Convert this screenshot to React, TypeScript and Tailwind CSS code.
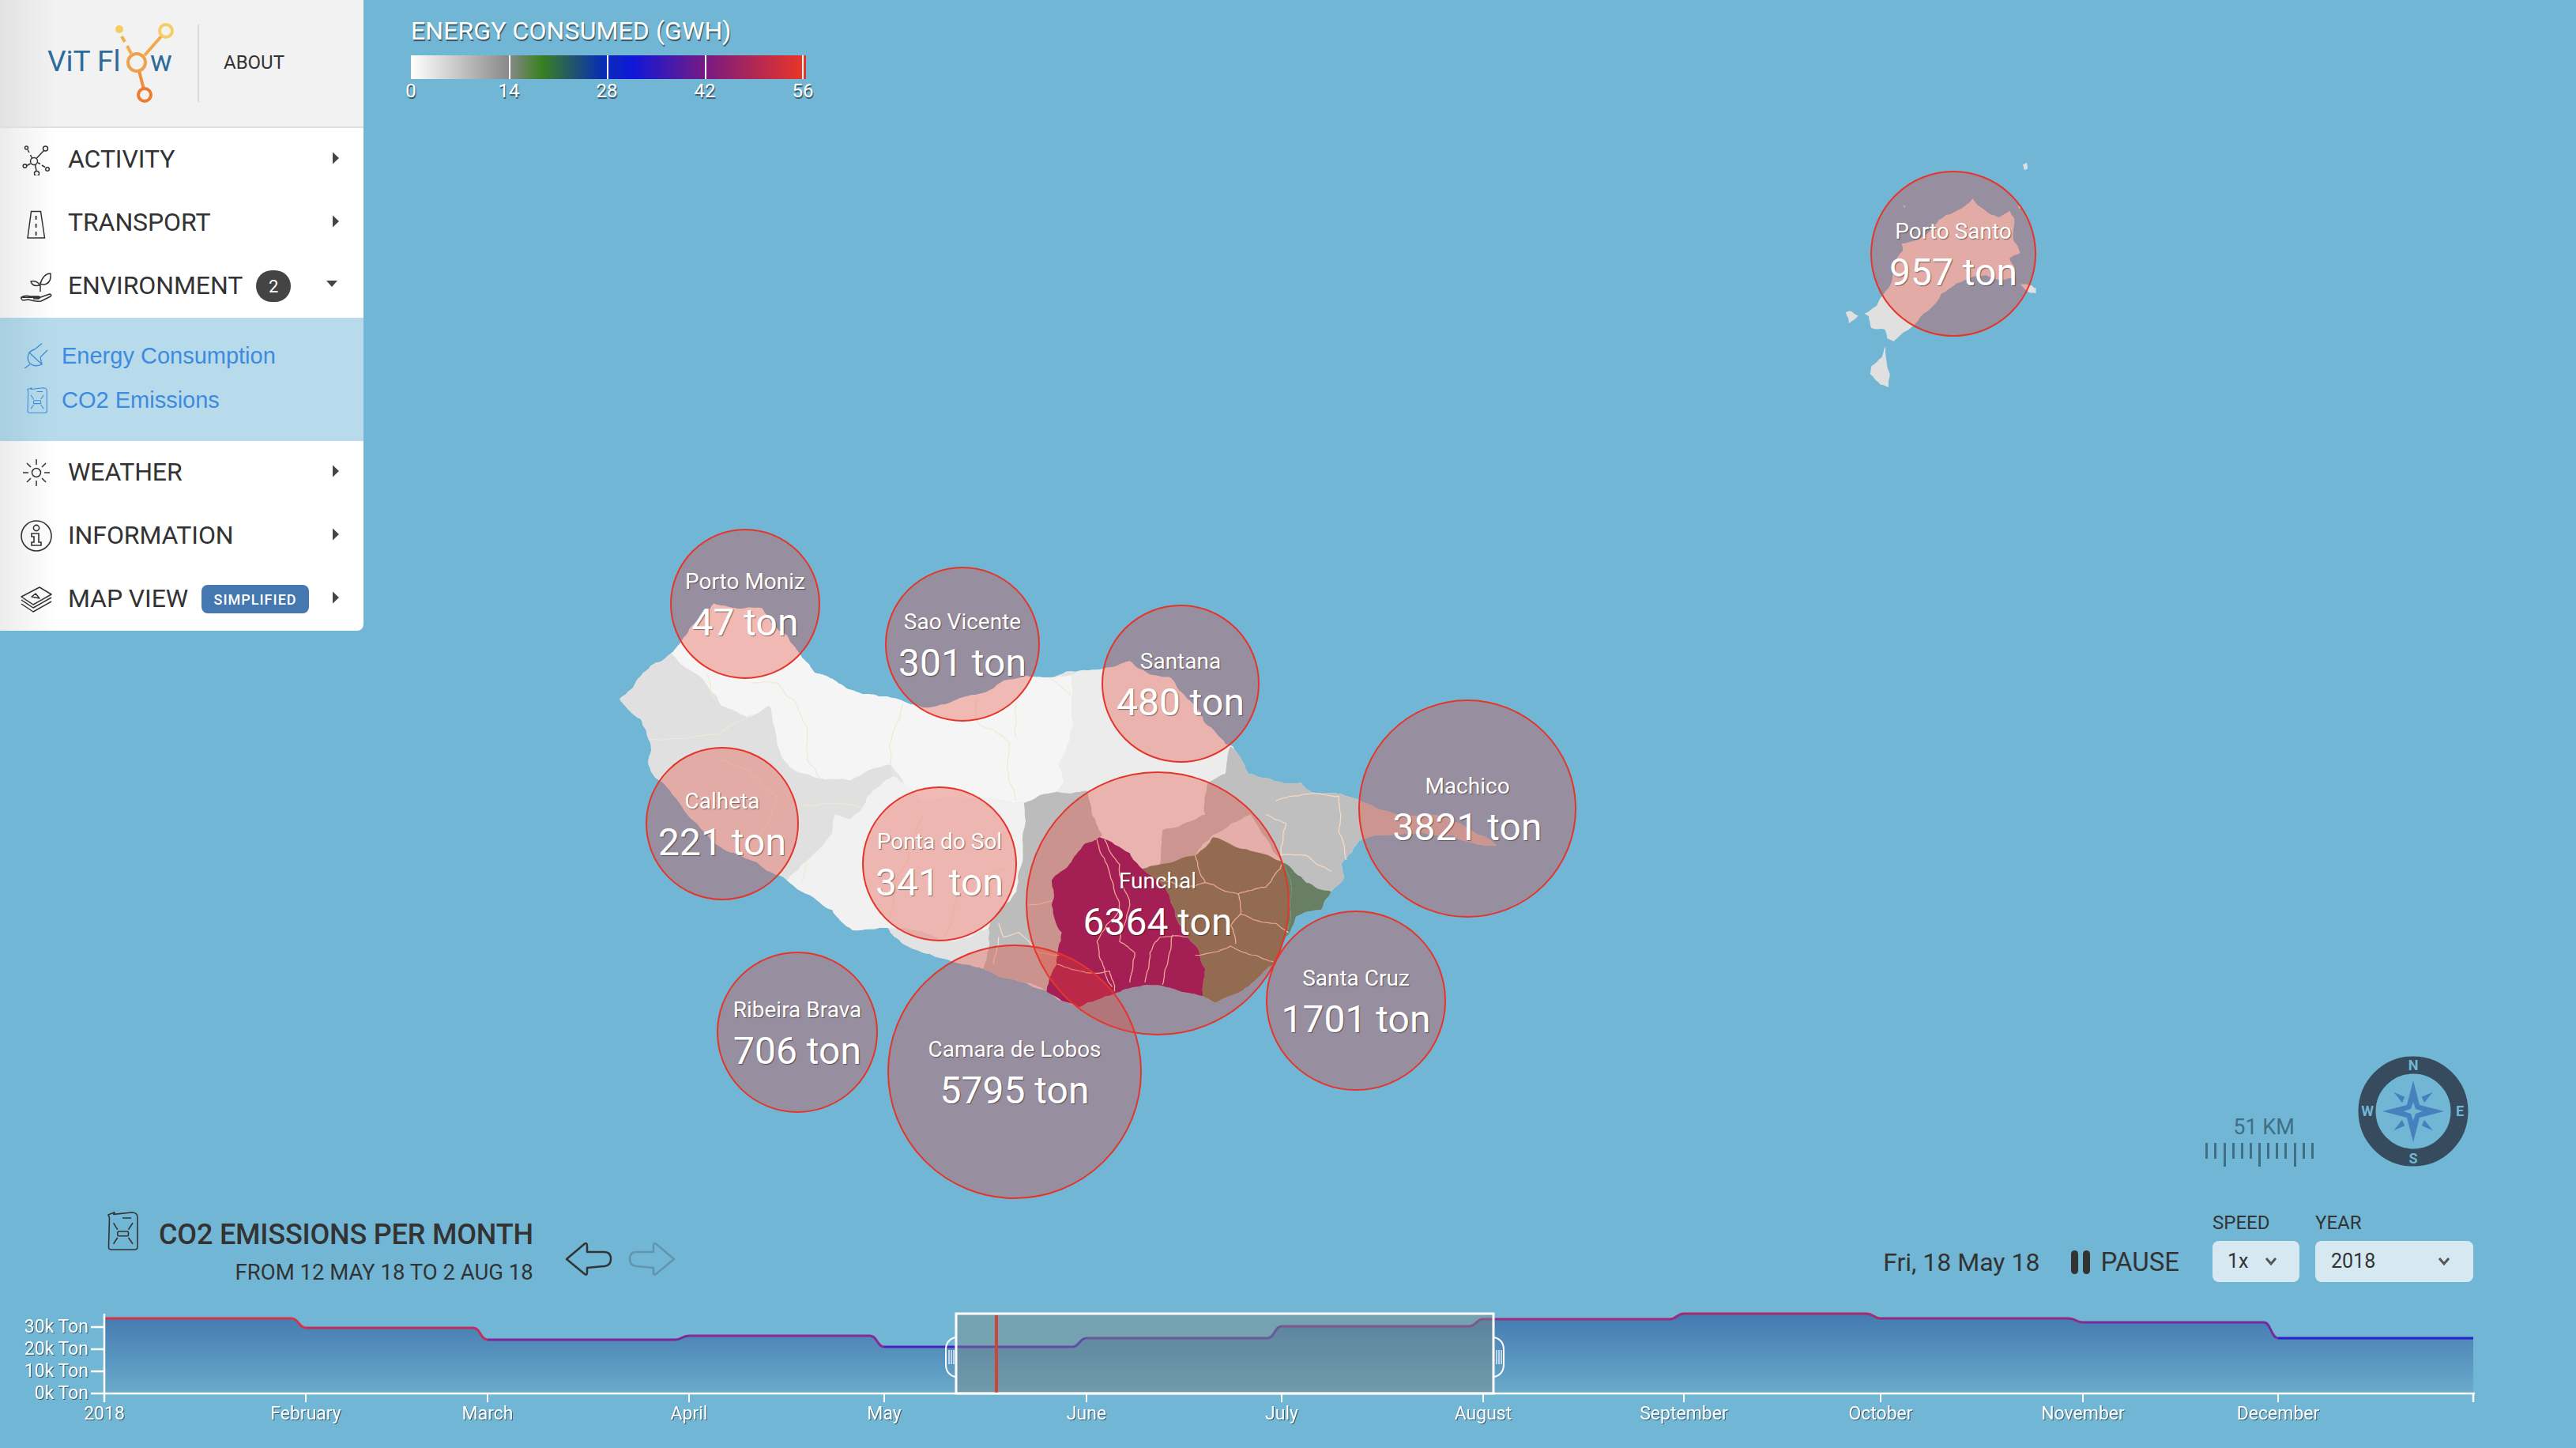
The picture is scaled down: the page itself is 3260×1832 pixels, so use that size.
import { ReactNode } from "react";

const FONT = "font-['Roboto',sans-serif]";

const bubbles = [
  { name: "Porto Moniz", value: "47 ton", cx: 943, cy: 764, r: 95 },
  { name: "Sao Vicente", value: "301 ton", cx: 1218, cy: 815, r: 98 },
  { name: "Santana", value: "480 ton", cx: 1494, cy: 865, r: 100 },
  { name: "Calheta", value: "221 ton", cx: 914, cy: 1042, r: 97 },
  { name: "Ponta do Sol", value: "341 ton", cx: 1189, cy: 1093, r: 98 },
  { name: "Funchal", value: "6364 ton", cx: 1465, cy: 1143, r: 167 },
  { name: "Ribeira Brava", value: "706 ton", cx: 1009, cy: 1306, r: 102 },
  { name: "Camara de Lobos", value: "5795 ton", cx: 1284, cy: 1356, r: 161 },
  { name: "Santa Cruz", value: "1701 ton", cx: 1716, cy: 1266, r: 114 },
  { name: "Machico", value: "3821 ton", cx: 1857, cy: 1023, r: 138 },
  { name: "Porto Santo", value: "957 ton", cx: 2472, cy: 321, r: 105 },
];

const outline =
  "38,425 60,405 80,375 100,352 140,325 165,290 190,255 225,215 265,225 320,225 345,265 370,285 400,335 425,368 465,385 495,405 520,415 555,420 610,435 650,445 700,430 760,412 800,385 840,375 890,378 960,362 1000,358 1050,342 1090,372 1130,378 1170,430 1200,480 1240,525 1255,530 1270,555 1285,590 1335,605 1360,612 1390,610 1410,630 1470,635 1505,648 1573,678 1678,685 1778,749 1690,725 1568,725 1510,735 1470,790 1475,820 1450,850 1430,890 1380,905 1360,950 1335,1010 1300,1045 1270,1070 1220,1095 1195,1080 1130,1062 1060,1060 1020,1075 950,1105 890,1070 840,1050 800,1040 760,1020 720,1010 690,1000 640,985 600,965 570,930 500,935 460,890 430,870 370,825 310,785 250,760 160,660 110,600 95,570 98,520 80,470 40,430";

const regions = [
  // west
  { fill: "#e0e0e0", points: "38,425 60,405 80,375 100,352 140,325 190,370 240,440 290,465 335,440 350,520 375,575 430,600 495,605 575,570 580,595 530,640 520,665 495,690 465,680 460,720 430,760 400,790 370,825 310,785 250,760 160,660 110,600 95,570 98,520 80,470 40,430" },
  // north west
  { fill: "#f5f5f5", points: "140,325 165,290 190,255 225,215 265,225 320,225 345,265 370,285 400,335 425,368 465,385 495,405 520,415 555,420 610,435 650,445 700,430 760,412 800,385 840,375 890,378 935,372 935,440 930,520 908,570 920,610 905,630 840,655 780,645 640,650 575,570 495,605 430,600 375,575 350,520 335,440 290,465 240,440 190,370" },
  // south middle
  { fill: "#f1f1f1", points: "370,825 400,790 430,760 460,720 465,680 495,690 520,665 530,640 580,595 640,650 780,645 840,655 838,760 825,850 770,930 700,960 570,930 500,935 460,890 430,870" },
  { fill: "#e2e2e2", points: "570,930 700,960 770,930 760,1020 720,1010 690,1000 640,985 600,965" },
  // north east
  { fill: "#ececec", points: "935,372 960,362 1000,358 1050,342 1090,372 1130,378 1170,430 1200,480 1240,525 1250,530 1240,590 1205,610 1200,680 1150,705 1115,715 1110,790 1075,800 1050,765 990,730 975,680 965,628 905,630 920,610 908,570 930,520 935,440" },
  // grey centre
  { fill: "#bcbcbc", points: "840,655 905,630 965,628 975,680 995,725 975,745 930,790 895,825 895,880 915,940 905,1010 885,1070 840,1050 800,1040 760,1020 770,930 825,850 838,760" },
  // grey east
  { fill: "#bfbfbf", points: "1250,530 1270,555 1285,590 1335,605 1360,612 1390,610 1410,630 1470,635 1505,648 1573,678 1678,685 1778,749 1690,725 1568,725 1510,735 1470,790 1475,820 1450,850 1400,830 1355,785 1290,680 1215,725 1180,770 1110,790 1115,715 1150,705 1200,680 1205,610 1240,590" },
  { fill: "#697f64", points: "1355,785 1400,830 1450,850 1430,890 1380,905 1360,950 1370,900" },
  // same green as the tip, it only looks brown under the Funchal bubble
  { fill: "#6a8161", points: "1110,790 1180,770 1215,730 1290,760 1355,785 1370,900 1360,950 1335,1010 1300,1045 1270,1070 1220,1095 1195,1080 1200,1020 1165,950 1110,830 1075,800" },
  { fill: "#840f65", points: "990,730 1050,765 1075,800 1110,830 1165,950 1200,1020 1195,1080 1130,1062 1060,1060 1020,1075 950,1105 885,1070 895,1030 905,1010 915,940 895,880 895,825 930,790 960,745" },
];

const paleLines = [
  "95,515 150,512 230,505 285,470 300,460",
  "300,390 350,390 385,430 410,490 410,560 435,600",
  "600,435 580,500 575,570",
  "745,425 750,480 810,520 810,600 825,650",
  "825,430 825,510",
  "890,378 935,420",
  "240,560 300,590 350,640 300,760",
  "640,680 600,800 570,920",
  "800,800 720,830 680,950",
  "400,660 480,655 520,665",
  "410,780 400,830",
  "1210,560 1225,590",
  "210,370 230,430",
];

const warmLines = [
  "985,735 1005,790 1020,850 1030,890 985,960 1000,1020 1015,1060",
  "1000,735 1030,790 1050,880 1030,960 1060,985 1050,1050",
  "1165,950 1110,950 1090,985 1080,1050",
  "1135,945 1125,1010 1115,1055",
  "905,1010 950,1025 1010,1025 1020,1070",
  "1180,770 1200,830 1265,855 1320,840 1355,785",
  "1110,825 1160,840 1200,830",
  "1265,855 1270,900 1340,920 1365,940",
  "1180,990 1250,970 1300,990 1335,1005",
  "1270,900 1250,925 1260,965",
  "1320,680 1360,700 1350,770 1400,770 1450,805",
  "1340,650 1400,635 1465,640 1465,720 1480,780",
  "850,880 895,870",
  "790,920 800,950 830,940 870,985 910,990",
  "780,1010 790,950",
];

const portoSanto = [
  "178,650 225,620 240,590 275,545 290,470 325,410 320,385 380,370 440,320 460,295 520,265 575,230 590,213 610,240 660,275 690,285 730,260 748,290 745,375 770,420 730,440 750,480 750,510 700,525 640,505 590,510 530,535 470,575 420,640 365,695 290,755 265,745 255,710 205,705 195,660",
  "108,645 125,640 155,658 120,688",
  "258,775 275,880 270,930 240,920 200,880 205,850 245,815",
  "780,85 795,78 798,100 785,106",
  "815,545 830,555 830,573 810,572 770,540",
  "325,237 335,245 328,248",
  "760,240 775,248 765,252",
];

// wiggle a segment; the offset comes from its ends so shared borders stay shared
function wiggle(ax: number, ay: number, bx: number, by: number, depth: number): number[][] {
  const dx = bx - ax;
  const dy = by - ay;
  const len = Math.hypot(dx, dy);
  if (depth === 0 || len < 8) return [];
  const forward = ax < bx || (ax === bx && ay < by);
  const key = forward ? ax * 7.3 + ay * 3.1 + bx * 1.7 + by * 5.9 : bx * 7.3 + by * 3.1 + ax * 1.7 + ay * 5.9;
  const n = Math.sin(key) * 1000;
  const amount = ((n - Math.floor(n)) - 0.5) * len * 0.16 * (forward ? 1 : -1);
  const mx = (ax + bx) / 2 - (dy / len) * amount;
  const my = (ay + by) / 2 + (dx / len) * amount;
  return [...wiggle(ax, ay, mx, my, depth - 1), [mx, my], ...wiggle(mx, my, bx, by, depth - 1)];
}

function rough(points: string, closed = true, depth = 3) {
  const pts = points.split(" ").map((p) => p.split(",").map(Number));
  const out: number[][] = [];
  pts.forEach((p, i) => {
    out.push(p);
    const q = pts[i + 1] ?? (closed ? pts[0] : null);
    if (q) out.push(...wiggle(p[0], p[1], q[0], q[1], depth));
  });
  return out.map((p) => `${p[0].toFixed(1)},${p[1].toFixed(1)}`).join(" ");
}

function MapLayer() {
  return (
    <svg className="absolute inset-0" width="3260" height="1832" viewBox="0 0 3260 1832">
      <g transform="translate(760 640) scale(0.6378 0.5742)">
        <polygon points={rough(outline)} fill="#e4e4e4" />
        {regions.map((r, i) => (
          <polygon key={i} points={rough(r.points)} fill={r.fill} />
        ))}
        {paleLines.map((p, i) => (
          <polyline key={i} points={rough(p, false)} fill="none" stroke="#efe9d4" strokeWidth="2" />
        ))}
        {warmLines.map((p, i) => (
          <polyline key={i} points={rough(p, false)} fill="none" stroke="#f5dcc8" strokeWidth="2" />
        ))}
      </g>
      <g transform="translate(2300 180) scale(0.3333)">
        {portoSanto.map((p, i) => (
          <polygon key={i} points={rough(p, true, 2)} fill="#e0e0e0" />
        ))}
      </g>
    </svg>
  );
}

function Bubble({ name, value, cx, cy, r }: (typeof bubbles)[number]) {
  return (
    <div
      className="absolute flex flex-col items-center justify-center gap-[6px] rounded-full border-2 border-[#e5352b] bg-[#e63f30]/33 pt-[6px] text-white [text-shadow:1px_1px_1px_rgba(0,0,0,0.45)]"
      style={{ left: cx - r, top: cy - r, width: r * 2, height: r * 2 }}
    >
      <div className="text-[28px] leading-[36px] whitespace-nowrap">{name}</div>
      <div className="text-[48px] leading-[56px] whitespace-nowrap">{value}</div>
    </div>
  );
}

function Caret({ down }: { down?: boolean }) {
  return down ? (
    <svg width="16" height="10" viewBox="0 0 16 10" className="mt-[-6px] mr-[2px]">
      <path d="M1 1 L15 1 L8 9 Z" fill="#444" />
    </svg>
  ) : (
    <svg width="10" height="16" viewBox="0 0 10 16" className="mt-[-4px]">
      <path d="M1 0.5 L9 8 L1 15.5 Z" fill="#444" />
    </svg>
  );
}

function Jerry({ className }: { className?: string }) {
  return (
    <svg viewBox="0 0 39 49" fill="none" stroke="currentColor" strokeWidth="1.6" className={className}>
      <path d="M1 4 L9 0.8 L7.7 3.4 L30.6 1 Q38 1 38 7 L38 45 Q38 48 34 48 L5 48 Q1.5 48 1.5 45 L2.5 8 Z" strokeLinejoin="round" />
      <path d="M19 8 L30 8 M7.6 14.3 L12.8 22.7 M32 14.3 L26.5 22.7 M12.8 32.7 L7.6 40.7 M26.5 32.7 L32 40.7" />
      <rect x="12.8" y="25" width="13.7" height="5.7" rx="1.5" />
    </svg>
  );
}

function IconActivity() {
  return (
    <svg viewBox="0 0 40 40" fill="none" stroke="#333" strokeWidth="1.5" className="h-10 w-10">
      <circle cx="17" cy="22" r="4.5" />
      <circle cx="7.5" cy="5" r="2" />
      <circle cx="31.5" cy="6" r="3" />
      <circle cx="5.5" cy="28" r="2.3" />
      <circle cx="34" cy="32" r="2.3" />
      <circle cx="20.5" cy="37.5" r="3" />
      <path d="M20 18.5 L29.5 8.5 M9 7.5 L11 11 M12.5 14 L14.5 18 M8 27.5 L12.5 25 M22 24 L25 25.5 M27 27 L31 29.5 M18.5 26.5 L20 34" />
    </svg>
  );
}

function IconRoad() {
  return (
    <svg viewBox="0 0 40 40" fill="none" stroke="#333" strokeWidth="1.5" className="h-10 w-10">
      <path d="M13.5 5.5 L25.5 5.5 L30.5 39 L9 39 Z" />
      <path d="M19.6 11 L19.6 16 M19.6 21 L19.6 26 M19.6 31 L19.6 36" strokeWidth="1.8" />
    </svg>
  );
}

function IconPlant() {
  return (
    <svg viewBox="0 0 40 40" fill="none" stroke="#333" strokeWidth="1.5" strokeLinejoin="round" className="h-10 w-10">
      <path d="M25 27 L25 15 M25 17 Q29 4 38 4 Q39 14 33 17 Q29 19 25 17 Z" />
      <path d="M24 19 Q22 13 13 14 Q15 21 24 19 Z" />
      <path d="M1 34 Q6 31 12 33 L23 33 Q26 34 23 36 L16 36 M24 34.5 L37 30 Q40 31 38 33 L26 39 Q20 40 10 37 L3 38 Q0 36 1 34 Z" />
    </svg>
  );
}

function IconSun() {
  return (
    <svg viewBox="0 0 40 40" fill="none" stroke="#333" strokeWidth="1.5" className="h-10 w-10">
      <circle cx="20" cy="20" r="5.5" />
      <path d="M20 3 L20 10 M20 30 L20 37 M3 20 L10 20 M30 20 L37 20 M8 8 L13 13 M27 27 L32 32 M32 8 L27 13 M13 27 L8 32" />
    </svg>
  );
}

function IconInfo() {
  return (
    <svg viewBox="0 0 40 40" fill="none" stroke="#333" strokeWidth="1.6" className="h-10 w-10">
      <circle cx="20" cy="20" r="19" />
      <circle cx="20" cy="10" r="3.6" />
      <path d="M14 17 L23 17 L23 28 L26 28 L26 32 L14 32 L14 28 L17 28 L17 21 L14 21 Z" />
    </svg>
  );
}

function IconLayers() {
  return (
    <svg viewBox="0 0 40 40" fill="none" stroke="#333" strokeWidth="1.5" strokeLinejoin="round" className="h-10 w-10">
      <path d="M1 17 L24 5 L39 14 L16 27 Z" />
      <path d="M14 17 L19 13 L24 19 Z" />
      <path d="M1 21 L16 31 L39 18 M1 26 L16 36 L39 23" />
    </svg>
  );
}

function IconPlug() {
  return (
    <svg viewBox="0 0 32 32" fill="none" stroke="#3e8ae0" strokeWidth="1.3" className="h-8 w-8">
      <path d="M7 12 L23 27 Q14 31 8 26 Q3 20 7 12 Z" />
      <path d="M14 8 L23 0.5 M21 18 L30 9 M8 27 L1 32 M7 12 Q10 9 14 8 M21 18 L23 27" />
    </svg>
  );
}

function MenuRow({ icon, label, extra, open }: { icon: ReactNode; label: string; extra?: ReactNode; open?: boolean }) {
  return (
    <div className="flex h-20 items-center bg-linear-to-r from-[#ececec] to-white to-[70px] pr-[30px] pl-[26px]">
      <div className="w-10">{icon}</div>
      <span className="mt-[-3px] ml-[20px] text-[32px] leading-none tracking-[-0.1px] text-[#333]">{label}</span>
      {extra}
      <div className="ml-auto flex items-center">
        <Caret down={open} />
      </div>
    </div>
  );
}

function Sidebar() {
  return (
    <aside className="w-[460px] shrink-0 overflow-hidden rounded-br-lg">
      <div className="flex h-[162px] items-center border-b-2 border-[#dfdfdf] bg-linear-to-r from-[#e2e2e2] to-[#f2f2f2] to-[70px]">
        <svg width="240" height="160" viewBox="0 0 240 160" className="shrink-0">
          <text x="60" y="90" fontSize="37" fill="#2f6b99" fontFamily="Roboto">ViT Fl</text>
          <text x="190" y="90" fontSize="37" fill="#2f6b99" fontFamily="Roboto">w</text>
          <path d="M183 70 L204 46" stroke="#efaa50" strokeWidth="4" />
          <path d="M166 68 L161 58 M158 53 L154 46" stroke="#f0b050" strokeWidth="4" />
          <path d="M176 90 L182 113" stroke="#ee8f3e" strokeWidth="4" />
          <circle cx="173" cy="79" r="11" fill="none" stroke="#eea24c" strokeWidth="4" />
          <circle cx="210" cy="39" r="8" fill="none" stroke="#f6cc66" strokeWidth="4" />
          <circle cx="183" cy="120" r="8" fill="none" stroke="#ec7b33" strokeWidth="4" />
          <circle cx="151" cy="37" r="5" fill="#f6cb60" />
        </svg>
        <div className="ml-[10px] h-[98px] w-[2px] bg-[#dcdcdc]" />
        <span className="mt-[-3px] ml-[31px] text-[24px] leading-none text-[#333]">ABOUT</span>
      </div>
      <MenuRow icon={<IconActivity />} label="ACTIVITY" />
      <MenuRow icon={<IconRoad />} label="TRANSPORT" />
      <MenuRow
        icon={<IconPlant />}
        label="ENVIRONMENT"
        open
        extra={
          <span className="ml-[17px] flex h-10 w-11 items-center justify-center rounded-full bg-[#444] text-[22px] text-white">2</span>
        }
      />
      <div className="flex h-[156px] flex-col gap-[16px] bg-linear-to-r from-[#a9d0e0] to-[#b7dbea] to-[70px] pt-[28px] pl-[30px] font-['Liberation_Sans',sans-serif] text-[29px] leading-[40px] text-[#3e8ae0]">
        <div className="flex items-center gap-[16px]">
          <IconPlug />
          <span>Energy Consumption</span>
        </div>
        <div className="flex items-center gap-[18px] pl-1">
          <Jerry className="h-[33px] w-[26px]" />
          <span>CO2 Emissions</span>
        </div>
      </div>
      <MenuRow icon={<IconSun />} label="WEATHER" />
      <MenuRow icon={<IconInfo />} label="INFORMATION" />
      <MenuRow
        icon={<IconLayers />}
        label="MAP VIEW"
        extra={
          <span className="ml-[17px] flex h-9 w-[136px] items-center justify-center rounded-lg bg-[#4577b0] text-[18px] font-medium tracking-[1px] text-white">
            SIMPLIFIED
          </span>
        }
      />
    </aside>
  );
}

function Legend() {
  return (
    <div className="ml-[60px] w-[520px] pt-[20px] text-white [text-shadow:1px_2px_1px_rgba(0,0,0,0.55)]">
      <div className="text-[32px] leading-[38px] tracking-[0.1px] whitespace-nowrap">ENERGY CONSUMED (GWH)</div>
      <div className="relative mt-[12px] h-[30px] w-[500px] bg-[linear-gradient(to_right,#ffffff_0%,#888888_25%,#3a8020_33%,#0a30b0_48%,#0f18d8_56%,#7a1a80_75%,#e83528_99%)]">
        <div className="absolute top-0 left-[124px] h-full w-[2px] bg-white" />
        <div className="absolute top-0 left-[248px] h-full w-[2px] bg-white" />
        <div className="absolute top-0 left-[372px] h-full w-[2px] bg-white" />
        <div className="absolute top-0 left-[495px] h-full w-[2px] bg-white" />
      </div>
      <div className="relative mt-[2px] flex h-[26px] w-[496px] justify-between text-[24px] leading-[26px]">
        {["0", "14", "28", "42", "56"].map((t) => (
          <span key={t} className="flex w-0 justify-center">{t}</span>
        ))}
      </div>
    </div>
  );
}

function Compass() {
  return (
    <svg width="140" height="140" viewBox="0 0 140 140">
      <circle cx="70" cy="70" r="58.5" fill="none" stroke="#374b5e" strokeWidth="22" />
      <path d="M70 31 L78 62 L109 70 L78 78 L70 109 L62 78 L31 70 L62 62 Z" fill="#4681be" />
      <path d="M70 58 L73 67 L82 70 L73 73 L70 82 L67 73 L58 70 L67 67 Z" fill="#71b7d5" />
      <path d="M94.7 45.7 L80.7 51.7 L84 59.3 Z M45.3 45.7 L59.3 51.7 L56 59.3 Z M94.7 94.3 L80.7 88.3 L84 80.7 Z M45.3 94.3 L59.3 88.3 L56 80.7 Z" fill="#4681be" />
      <g fill="#71b7d5" fontSize="18" fontWeight="700" fontFamily="Roboto" textAnchor="middle">
        <text x="70" y="18">N</text>
        <text x="70" y="136">S</text>
        <text x="129" y="76">E</text>
        <text x="12" y="76">W</text>
      </g>
    </svg>
  );
}

const scaleTicks = [0, 11, 23, 34, 45, 56, 67, 78, 89, 100, 112, 123, 134];

function ScaleBar() {
  return (
    <div className="flex w-[140px] flex-col items-center">
      <div className="ml-[12px] text-[27px] leading-[30px] text-[#3f6f85]">51 KM</div>
      <svg width="140" height="32" viewBox="0 0 140 32" className="mt-[5px] mb-[-2px]">
        {scaleTicks.map((x, i) => (
          <rect key={x} x={x + 2} y="0" width="3" height={i % 4 === 2 && i < 11 ? 30 : 20} fill="#3f6f85" />
        ))}
      </svg>
    </div>
  );
}

function Arrow({ flip, faded }: { flip?: boolean; faded?: boolean }) {
  return (
    <svg width="60" height="44" viewBox="0 0 60 44" fill="none" className={`${flip ? "-scale-x-100" : ""} ${faded ? "opacity-25" : ""}`}>
      <path
        d="M2 22 L25 2.5 Q28 1 28 5 L28 13 L50 13 Q58 13 58 22 Q58 30 50 31 L28 33 L28 39 Q28 43 25 41 Z"
        stroke="#333"
        strokeWidth="2.5"
        strokeLinejoin="round"
      />
    </svg>
  );
}

function Select({ value, width, pad }: { value: string; width: string; pad: string }) {
  return (
    <div className={`flex h-[52px] items-center justify-between rounded-lg bg-[#d6e9f3] text-[25px] text-[#333] ${width} ${pad}`}>
      <span>{value}</span>
      <svg width="16" height="12" viewBox="0 0 16 12" fill="none" stroke="#555" strokeWidth="3">
        <path d="M2 2 L8 9 L14 2" />
      </svg>
    </div>
  );
}

function ChartHeader() {
  return (
    <div className="flex h-[117px] items-start text-[#333]">
      <Jerry className="ml-[136px] h-[49px] w-[39px] shrink-0" />
      <div className="mt-[8px] ml-[26px] flex flex-col items-end">
        <div className="text-[36px] leading-[42px] font-medium tracking-[-0.2px] whitespace-nowrap">CO2 EMISSIONS PER MONTH</div>
        <div className="mt-[11px] text-[27.5px] leading-[32px] whitespace-nowrap">FROM 12 MAY 18 TO 2 AUG 18</div>
      </div>
      <div className="mt-[38px] ml-[40px] flex gap-[20px]">
        <Arrow />
        <Arrow flip faded />
      </div>
      <div className="mt-[46px] ml-auto text-[32px] leading-[36px] whitespace-nowrap">Fri, 18 May 18</div>
      <div className="mt-[46px] ml-[40px] flex items-center gap-[13px]">
        <div className="flex gap-[6px]">
          <div className="h-[30px] w-[9px] rounded-full bg-[#333]" />
          <div className="h-[30px] w-[9px] rounded-full bg-[#333]" />
        </div>
        <span className="text-[33px] leading-[36px]">PAUSE</span>
      </div>
      <div className="ml-[42px]">
        <div className="mb-[9px] text-[24px] leading-[28px]">SPEED</div>
        <Select value="1x" width="w-[110px]" pad="pl-[19px] pr-[28px]" />
      </div>
      <div className="mr-[130px] ml-[20px]">
        <div className="mb-[9px] text-[24px] leading-[28px]">YEAR</div>
        <Select value="2018" width="w-[200px]" pad="pl-[20px] pr-[29px]" />
      </div>
    </div>
  );
}

const months = [
  { x: 132, y: 1668, c: "#d8324a", label: "2018" },
  { x: 387, y: 1680, c: "#c0305f", label: "February" },
  { x: 617, y: 1695, c: "#80249a", label: "March" },
  { x: 872, y: 1690, c: "#8a2a90", label: "April" },
  { x: 1119, y: 1704, c: "#4a20c0", label: "May" },
  { x: 1375, y: 1693, c: "#6030b0", label: "June" },
  { x: 1622, y: 1678, c: "#8a2a90", label: "July" },
  { x: 1877, y: 1669, c: "#a02a7a", label: "August" },
  { x: 2131, y: 1662, c: "#a82a70", label: "September" },
  { x: 2380, y: 1668, c: "#902a88", label: "October" },
  { x: 2636, y: 1673, c: "#7a2aa0", label: "November" },
  { x: 2883, y: 1693, c: "#2a20d0", label: "December" },
];
const END_X = 3130;
const BASE_Y = 1763;

function monthLine(i: number) {
  const m = months[i];
  const next = months[i + 1];
  if (!next) return `M${m.x} ${m.y} L${END_X} ${m.y}`;
  return `M${m.x} ${m.y} L${next.x - 18} ${m.y} C${next.x - 9} ${m.y} ${next.x - 9} ${next.y} ${next.x} ${next.y}`;
}

function Chart() {
  const area = months.map((_, i) => monthLine(i).replace("M", i === 0 ? "M" : "L")).join(" ");
  return (
    <svg width="3260" height="182" viewBox="0 1650 3260 182" className="block">
      <defs>
        <linearGradient id="areaFill" gradientUnits="userSpaceOnUse" x1="0" y1="1662" x2="0" y2="1763">
          <stop offset="0" stopColor="#4379b0" />
          <stop offset="1" stopColor="#6aabcb" />
        </linearGradient>
      </defs>
      <path d={`${area} L${END_X} ${BASE_Y} L132 ${BASE_Y} Z`} fill="url(#areaFill)" />
      {months.map((m, i) => (
        <path key={m.label} d={monthLine(i)} fill="none" stroke={m.c} strokeWidth="3" />
      ))}
      <rect x="1210" y="1662" width="680" height="101" fill="#788a85" fillOpacity="0.45" stroke="#fff" strokeWidth="3" />
      <rect x="1259" y="1664" width="4" height="98" fill="#c9463a" />
      <g fill="none" stroke="#fff" strokeWidth="2">
        <path d="M1209 1692 Q1197 1695 1197 1708 L1197 1726 Q1197 1739 1209 1742" />
        <path d="M1891 1692 Q1903 1695 1903 1708 L1903 1726 Q1903 1739 1891 1742" />
        <path d="M1201 1708 L1201 1726 M1204 1708 L1204 1726 M1207 1708 L1207 1726" strokeWidth="1.2" />
        <path d="M1894 1708 L1894 1726 M1897 1708 L1897 1726 M1900 1708 L1900 1726" strokeWidth="1.2" />
      </g>
      <g stroke="#fff" strokeWidth="2.5">
        <path d="M132 1662 L132 1774 M131 1763 L3132 1763 M3130 1763 L3130 1774" />
        <path d="M115 1679 L132 1679 M115 1707 L132 1707 M115 1735 L132 1735 M115 1763 L132 1763" />
        {months.slice(1).map((m) => (
          <path key={m.label} d={`M${m.x} 1763 L${m.x} 1774`} strokeWidth="2" />
        ))}
      </g>
      <g fill="#fff" fontFamily="Roboto" fontSize="23" className="[filter:drop-shadow(1px_1px_0_rgba(0,0,0,0.5))]">
        {months.map((m) => (
          <text key={m.label} x={m.x} y="1796" textAnchor="middle">{m.label}</text>
        ))}
        <g textAnchor="end">
          <text x="112" y="1686">30k Ton</text>
          <text x="112" y="1714">20k Ton</text>
          <text x="112" y="1742">10k Ton</text>
          <text x="112" y="1770">0k Ton</text>
        </g>
      </g>
    </svg>
  );
}

export default function App() {
  return (
    <div className={`relative h-[1832px] w-[3260px] overflow-hidden bg-[#71b7d5] ${FONT}`}>
      <MapLayer />
      {bubbles.map((b) => (
        <Bubble key={b.name} {...b} />
      ))}
      <div className="relative flex h-full flex-col">
        <div className="flex items-start">
          <Sidebar />
          <Legend />
        </div>
        <div className="mt-auto mb-[57px] flex items-end justify-end gap-[55px] pr-[136px]">
          <ScaleBar />
          <Compass />
        </div>
        <ChartHeader />
        <Chart />
      </div>
    </div>
  );
}
